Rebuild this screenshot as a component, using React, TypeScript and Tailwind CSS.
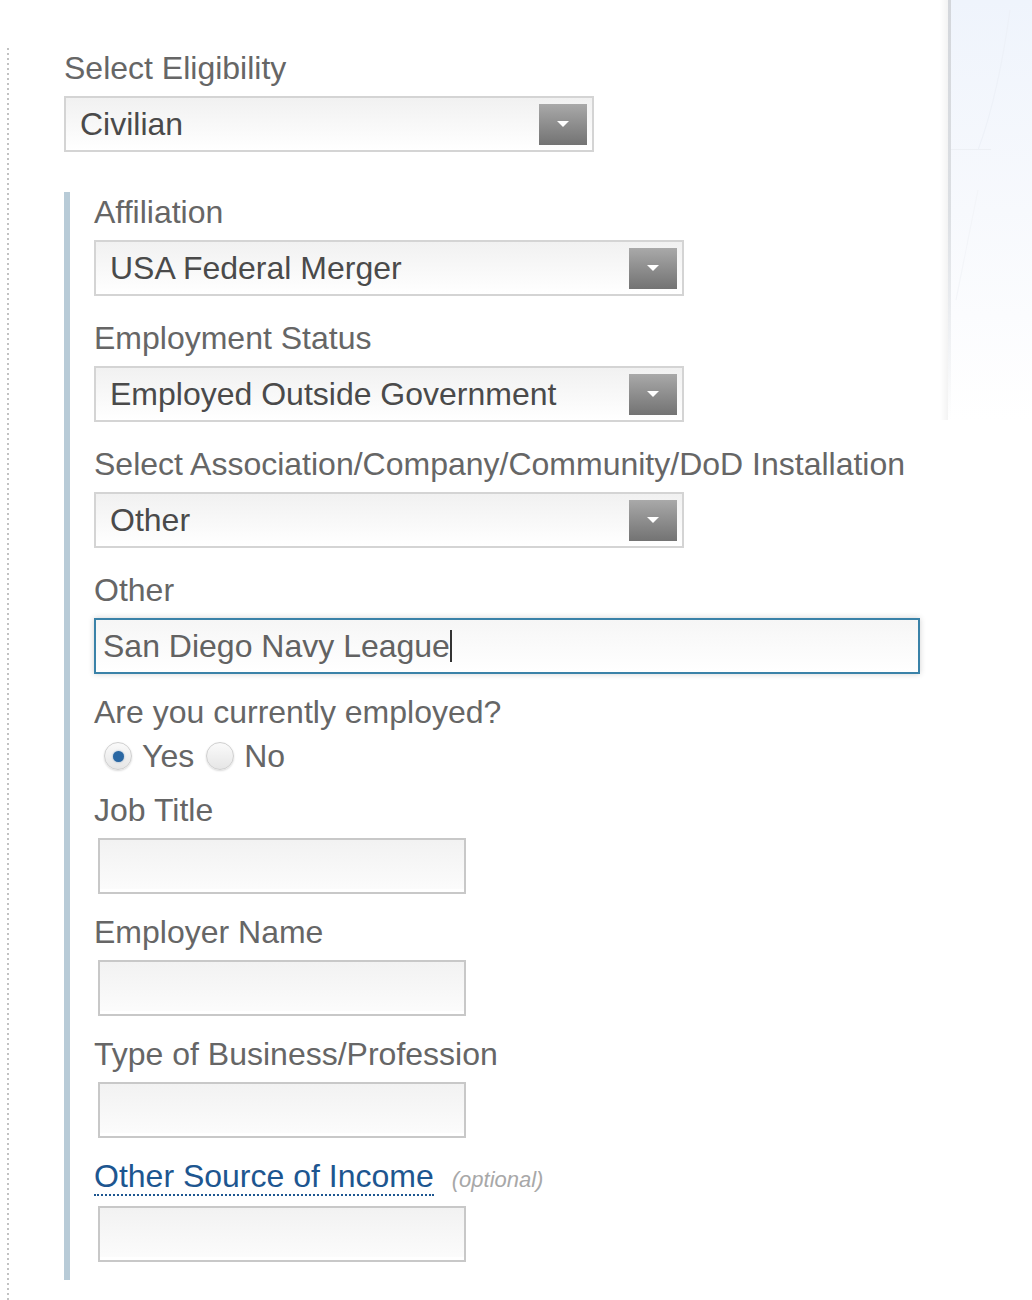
import React from "react";

function Label({ children }: { children: React.ReactNode }) {
  return <div className="text-[32px] leading-[36px] text-[#666666] whitespace-nowrap">{children}</div>;
}

function Select({ value, width }: { value: string; width: string }) {
  return (
    <div
      className={`mt-[10px] ${width} h-[56px] box-border border-2 border-[#d4d4d4] bg-gradient-to-b from-[#f1f1f1] to-white flex items-center justify-between pl-[14px] pr-[5px]`}
    >
      <span className="text-[32px] leading-none text-[#4a4a4a] whitespace-nowrap">{value}</span>
      <div className="w-[48px] h-[41px] bg-gradient-to-b from-[#a9a9a9] to-[#737373] flex items-center justify-center">
        <div className="w-0 h-0 border-l-[6px] border-r-[6px] border-t-[6px] border-l-transparent border-r-transparent border-t-white" />
      </div>
    </div>
  );
}

function TextBox() {
  return (
    <div className="mt-[10px] ml-[4px] w-[368px] h-[56px] box-border border-2 border-[#c8c8c8] bg-gradient-to-b from-[#f2f2f2] to-[#fcfcfc] shadow-[inset_0_-3px_0_#ffffff]" />
  );
}

function Radio({ checked }: { checked?: boolean }) {
  return (
    <div className="w-[28px] h-[28px] rounded-full border border-[#cfcfcf] bg-gradient-to-b from-[#fafafa] to-[#e6e6e6] shadow-[0_1px_2px_rgba(0,0,0,0.15)] flex items-center justify-center">
      {checked && <div className="w-[11px] h-[11px] rounded-full bg-[#2a67a3] shadow-[0_0_2px_rgba(42,103,163,0.6)]" />}
    </div>
  );
}

export default function App() {
  return (
    <div className="w-[1032px] h-[1300px] bg-white flex overflow-hidden font-['Liberation_Sans',Arial,Helvetica,sans-serif]">
      {/* main column */}
      <div className="w-[948px] flex pl-[7px]">
        <div className="mt-[48px] w-[2px] self-stretch bg-[linear-gradient(to_bottom,#c2c2c2_2px,transparent_2px)] bg-[length:2px_5px]" />
        <div className="ml-[55px] pt-[50px] flex flex-col">
          <Label>Select Eligibility</Label>
          <Select value="Civilian" width="w-[530px]" />

          <div className="mt-[40px] border-l-[6px] border-[#b8cbd7] pl-[24px] pt-[2px] pb-[18px] flex flex-col">
            <Label>Affiliation</Label>
            <Select value="USA Federal Merger" width="w-[590px]" />

            <div className="mt-[24px]">
              <Label>Employment Status</Label>
            </div>
            <Select value="Employed Outside Government" width="w-[590px]" />

            <div className="mt-[24px]">
              <Label>Select Association/Company/Community/DoD Installation</Label>
            </div>
            <Select value="Other" width="w-[590px]" />

            <div className="mt-[24px]">
              <Label>Other</Label>
            </div>
            <div className="mt-[10px] w-[826px] h-[56px] box-border border-2 border-[#3a82a8] bg-gradient-to-b from-[#f6f6f6] to-white shadow-[0_0_6px_rgba(0,0,0,0.18)] flex items-center pl-[7px]">
              <span className="text-[32px] leading-none text-[#626262] whitespace-nowrap">San Diego Navy League</span>
              <span className="w-[2px] h-[32px] bg-[#333333]" />
            </div>

            <div className="mt-[20px]">
              <Label>Are you currently employed?</Label>
            </div>
            <div className="mt-[8px] h-[36px] flex items-center">
              <div className="ml-[10px]">
                <Radio checked />
              </div>
              <span className="ml-[10px] text-[32px] leading-[36px] text-[#666666]">Yes</span>
              <div className="ml-[12px]">
                <Radio />
              </div>
              <span className="ml-[10px] text-[32px] leading-[36px] text-[#666666]">No</span>
            </div>

            <div className="mt-[18px]">
              <Label>Job Title</Label>
            </div>
            <TextBox />

            <div className="mt-[20px]">
              <Label>Employer Name</Label>
            </div>
            <TextBox />

            <div className="mt-[20px]">
              <Label>Type of Business/Profession</Label>
            </div>
            <TextBox />

            <div className="mt-[20px] flex items-baseline">
              <span className="inline-block text-[32px] leading-[36px] text-[#1d5690] border-b-2 border-dotted border-[#1d5690] whitespace-nowrap">
                Other Source of Income
              </span>
              <span className="ml-[18px] text-[22px] italic text-[#a8a8a8]">(optional)</span>
            </div>
            <TextBox />
          </div>
        </div>
      </div>

      {/* right decorative panel */}
      <div className="relative w-[84px] h-[420px] bg-gradient-to-b from-[#eff4fc] via-[#f7f9fd] to-white">
        <div className="absolute left-0 top-0 w-[3px] h-full bg-gradient-to-b from-[#d3d6db] via-[#dcdfe3] to-transparent" />
        <div className="absolute -left-[8px] top-0 w-[8px] h-full bg-gradient-to-l from-[#f3f3f3] to-transparent" />
        <div className="absolute left-[3px] top-[149px] w-[40px] h-[1px] bg-[#edf0f5]" />
        <svg className="absolute left-0 top-0" width="84" height="420" viewBox="0 0 84 420" fill="none">
          <path d="M62 10 C55 60 45 110 30 150" stroke="#edf1f8" strokeWidth="1" />
          <path d="M30 190 C22 230 16 260 8 300" stroke="#f3f5f9" strokeWidth="1" />
        </svg>
      </div>
    </div>
  );
}
